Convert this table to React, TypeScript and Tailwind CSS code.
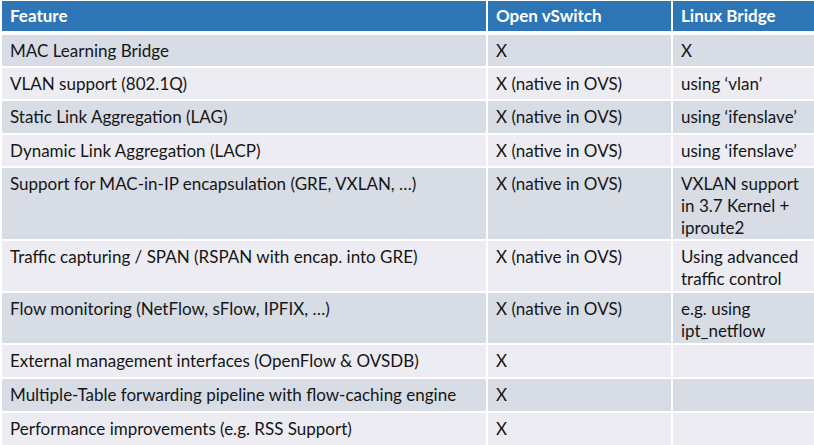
import React from 'react'

type Row = { feature: string; ovs: string; lb: string[]; h: string }

const rows: Row[] = [
  { feature: 'MAC Learning Bridge', ovs: 'X', lb: ['X'], h: 'h-[31px]' },
  { feature: 'VLAN support (802.1Q)', ovs: 'X (native in OVS)', lb: ['using \u2018vlan\u2019'], h: 'h-[31px]' },
  { feature: 'Static Link Aggregation (LAG)', ovs: 'X (native in OVS)', lb: ['using \u2018ifenslave\u2019'], h: 'h-[32px]' },
  { feature: 'Dynamic Link Aggregation (LACP)', ovs: 'X (native in OVS)', lb: ['using \u2018ifenslave\u2019'], h: 'h-[31px]' },
  { feature: 'Support for MAC-in-IP encapsulation (GRE, VXLAN, \u2026)', ovs: 'X (native in OVS)', lb: ['VXLAN support', 'in 3.7 Kernel +', 'iproute2'], h: 'h-[71px]' },
  { feature: 'Traffic capturing / SPAN (RSPAN with encap. into GRE)', ovs: 'X (native in OVS)', lb: ['Using advanced', 'traffic control'], h: 'h-[50px]' },
  { feature: 'Flow monitoring (NetFlow, sFlow, IPFIX, \u2026)', ovs: 'X (native in OVS)', lb: ['e.g. using', 'ipt_netflow'], h: 'h-[50px]' },
  { feature: 'External management interfaces (OpenFlow & OVSDB)', ovs: 'X', lb: [], h: 'h-[32px]' },
  { feature: 'Multiple-Table forwarding pipeline with flow-caching engine', ovs: 'X', lb: [], h: 'h-[32px]' },
  { feature: 'Performance improvements (e.g. RSS Support)', ovs: 'X', lb: [], h: 'h-[33px]' },
]

export default function App() {
  return (
    <div className="w-[814px] h-[445px] bg-white pt-[1px] pl-[2px] overflow-hidden text-[#161616] text-[17px] leading-[22px]"
      style={{ fontFamily: 'Lato, "Open Sans", sans-serif' }}>
      {/* Header */}
      <div className="grid grid-cols-[484px_183px_141px] gap-x-[2px]">
        <div className="h-[30px] bg-[#2e75b6] text-white font-bold pl-[8px] pt-[4px]">Feature</div>
        <div className="h-[30px] bg-[#2e75b6] text-white font-bold pl-[8px] pt-[4px]">Open vSwitch</div>
        <div className="h-[30px] bg-[#2e75b6] text-white font-bold pl-[8px] pt-[4px]">Linux Bridge</div>
      </div>
      <div className="grid grid-cols-[484px_183px_141px] gap-x-[2px] gap-y-[2px] mt-[4px]">
        {rows.map((r, i) => {
          const bg = i % 2 === 0 ? 'bg-[#d7dce5]' : 'bg-[#ececf2]'
          return (
            <React.Fragment key={i}>
              <div className={`${r.h} ${bg} pl-[8px] pt-[5px]`}>{r.feature}</div>
              <div className={`${r.h} ${bg} pl-[8px] pt-[5px]`}>{r.ovs}</div>
              <div className={`${r.h} ${bg} pl-[8px] pt-[5px]`}>
                {r.lb.map((l, j) => <div key={j}>{l}</div>)}
              </div>
            </React.Fragment>
          )
        })}
      </div>
    </div>
  )
}
